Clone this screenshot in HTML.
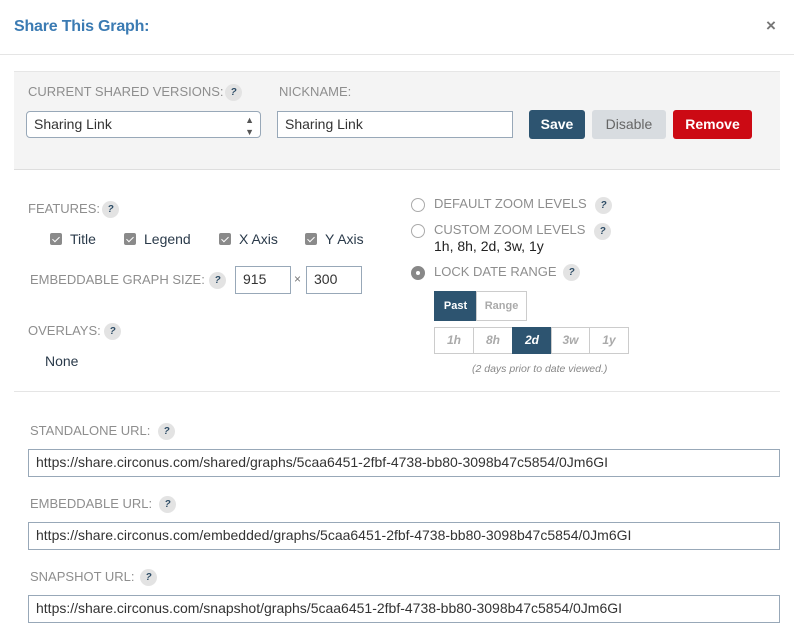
<!DOCTYPE html>
<html><head><meta charset="utf-8"><style>
*{box-sizing:border-box;margin:0;padding:0}
body{width:794px;height:644px;background:#fff;font-family:"Liberation Sans",sans-serif;position:relative;overflow:hidden;color:#333}
.a{position:absolute;white-space:nowrap}
.lbl{font-size:13px;color:#8e8e8e;line-height:16px}
.q{position:absolute;width:17px;height:17px;border-radius:50%;background:#e3e3e3;color:#2d4c66;font-size:10px;font-weight:bold;font-style:italic;text-align:center;line-height:17px}
.inp{position:absolute;border:1px solid #98a8b8;background:#fff;font-size:14px;color:#333;padding-left:7px;line-height:25px}
.cb{position:absolute;width:12px;height:12px;border-radius:2px;background:#8a8a8a}
.cb:after{content:"";position:absolute;left:4px;top:2px;width:3px;height:6px;border:solid #fff;border-width:0 1.5px 1.5px 0;transform:rotate(45deg)}
.ct{font-size:14px;color:#2a3a4a;line-height:16px}
.rd{position:absolute;width:14px;height:14px;border-radius:50%;border:1px solid #aaa;background:#fff}
.btn{position:absolute;height:29px;border-radius:3px;font-size:14px;text-align:center;line-height:29px}
.seg{position:absolute;border:1px solid #ccc;font-size:12px;font-style:italic;color:#aaa;text-align:center;font-weight:bold}
</style></head><body>
<div class="a" style="left:14px;top:18px;font-size:16px;font-weight:bold;color:#3b7bb3;letter-spacing:-0.2px">Share This Graph:</div>
<div class="a" style="left:766px;top:16px;font-size:17px;font-weight:bold;color:#777">×</div>
<div class="a" style="left:0;top:54px;width:794px;height:1px;background:#e5e5e5"></div>

<div class="a" style="left:14px;top:71px;width:766px;height:99px;background:#f4f4f4;border-top:1px solid #e6e6e6;border-bottom:1px solid #dedede"></div>
<div class="a lbl" style="left:28px;top:84px">CURRENT SHARED VERSIONS:</div>
<div class="q" style="left:225px;top:84px">?</div>
<div class="a lbl" style="left:279px;top:84px">NICKNAME:</div>
<div class="inp" style="left:26px;top:111px;width:235px;height:27px;border-radius:4px">Sharing Link<span style="position:absolute;right:6px;top:0;font-size:9px;color:#555;line-height:12px;top:2px">▲<br>▼</span></div>
<div class="inp" style="left:277px;top:111px;width:236px;height:27px">Sharing Link</div>
<div class="btn" style="left:529px;top:110px;width:56px;background:#2d5470;color:#fff;font-weight:bold">Save</div>
<div class="btn" style="left:592px;top:110px;width:74px;background:#d8dce0;color:#666">Disable</div>
<div class="btn" style="left:673px;top:110px;width:79px;background:#cc0a14;color:#fff;font-weight:bold">Remove</div>

<div class="a lbl" style="left:28px;top:201px">FEATURES:</div>
<div class="q" style="left:102px;top:201px">?</div>
<div class="cb" style="left:50px;top:233px"></div><div class="a ct" style="left:70px;top:231px">Title</div>
<div class="cb" style="left:124px;top:233px"></div><div class="a ct" style="left:144px;top:231px">Legend</div>
<div class="cb" style="left:219px;top:233px"></div><div class="a ct" style="left:239px;top:231px">X Axis</div>
<div class="cb" style="left:305px;top:233px"></div><div class="a ct" style="left:325px;top:231px">Y Axis</div>
<div class="a lbl" style="left:30px;top:272px">EMBEDDABLE GRAPH SIZE:</div>
<div class="q" style="left:209px;top:272px">?</div>
<div class="inp" style="left:235px;top:266px;width:56px;height:28px">915</div>
<div class="a" style="left:294px;top:272px;font-size:12px;color:#777">×</div>
<div class="inp" style="left:306px;top:266px;width:56px;height:28px">300</div>
<div class="a lbl" style="left:28px;top:323px">OVERLAYS:</div>
<div class="q" style="left:104px;top:323px">?</div>
<div class="a ct" style="left:45px;top:353px">None</div>

<div class="rd" style="left:411px;top:198px"></div>
<div class="a lbl" style="left:434px;top:196px">DEFAULT ZOOM LEVELS</div>
<div class="q" style="left:595px;top:197px">?</div>
<div class="rd" style="left:411px;top:224px"></div>
<div class="a lbl" style="left:434px;top:222px">CUSTOM ZOOM LEVELS</div>
<div class="q" style="left:594px;top:223px">?</div>
<div class="a ct" style="left:434px;top:238px;color:#222">1h, 8h, 2d, 3w, 1y</div>
<div class="rd" style="left:411px;top:266px;background:#888;border-color:#888"><div style="position:absolute;left:4px;top:4px;width:4px;height:4px;border-radius:50%;background:#fff"></div></div>
<div class="a lbl" style="left:434px;top:264px">LOCK DATE RANGE</div>
<div class="q" style="left:563px;top:264px">?</div>
<div class="seg" style="left:434px;top:291px;width:43px;height:30px;background:#2d5470;border-color:#2d5470;color:#fff;font-style:normal;line-height:28px;font-size:11px">Past</div>
<div class="seg" style="left:476px;top:291px;width:51px;height:30px;font-style:normal;line-height:28px;font-size:11px">Range</div>
<div class="seg" style="left:434px;top:327px;width:40px;height:27px;line-height:25px">1h</div>
<div class="seg" style="left:473px;top:327px;width:40px;height:27px;line-height:25px">8h</div>
<div class="seg" style="left:512px;top:327px;width:40px;height:27px;line-height:25px;background:#2d5470;border-color:#2d5470;color:#fff">2d</div>
<div class="seg" style="left:551px;top:327px;width:39px;height:27px;line-height:25px">3w</div>
<div class="seg" style="left:589px;top:327px;width:40px;height:27px;line-height:25px">1y</div>
<div class="a" style="left:472px;top:363px;font-size:10.5px;font-style:italic;color:#888">(2 days prior to date viewed.)</div>

<div class="a" style="left:14px;top:391px;width:766px;height:1px;background:#e5e5e5"></div>

<div class="a lbl" style="left:30px;top:423px">STANDALONE URL:</div>
<div class="q" style="left:158px;top:423px">?</div>
<div class="inp" style="left:28px;top:449px;width:752px;height:28px">https://share.circonus.com/shared/graphs/5caa6451-2fbf-4738-bb80-3098b47c5854/0Jm6GI</div>
<div class="a lbl" style="left:30px;top:496px">EMBEDDABLE URL:</div>
<div class="q" style="left:159px;top:496px">?</div>
<div class="inp" style="left:28px;top:522px;width:752px;height:28px">https://share.circonus.com/embedded/graphs/5caa6451-2fbf-4738-bb80-3098b47c5854/0Jm6GI</div>
<div class="a lbl" style="left:30px;top:569px">SNAPSHOT URL:</div>
<div class="q" style="left:140px;top:569px">?</div>
<div class="inp" style="left:28px;top:595px;width:752px;height:28px">https://share.circonus.com/snapshot/graphs/5caa6451-2fbf-4738-bb80-3098b47c5854/0Jm6GI</div>
</body></html>
